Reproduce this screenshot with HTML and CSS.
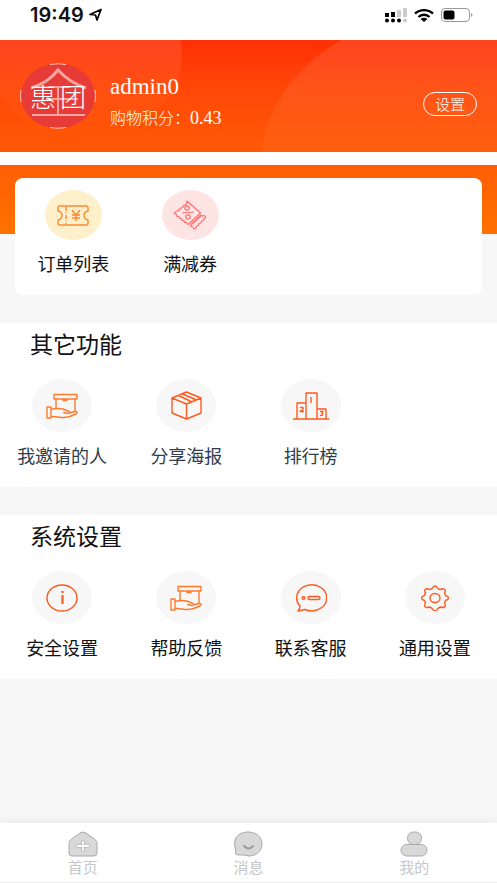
FILE: index.html
```html
<!DOCTYPE html>
<html lang="zh-CN">
<head>
<meta charset="utf-8">
<meta name="viewport" content="width=device-width, initial-scale=1">
<title>我的</title>
<link rel="stylesheet" href="styles.css">
</head>
<body>
<svg class="sprite" aria-hidden="true">
  <symbol id="delivery" viewBox="0 0 32 26">
    <path d="M8 1.500h23v4.500H8zM10 6v10M29 6v13M16.500 7.500h5M1 14h4v11H1zM5 16.500c5-1.500 9-1 12-.5l6 2.500q2 2-1 2l-5-1M5 23.500c6-.5 8 1.500 13 1 5-.5 8-1.500 12-3.500 2-1.500 1-3-1-2.500l-6 1.500"/>
  </symbol>
</svg>

<header class="status">
  <div class="status-left">
    <span class="time">19:49</span>
    <svg width="15" height="14" viewBox="0 0 15 14"><path d="M2 6.500 13 1.500 9 12 7.500 7z" fill="none" stroke="#000" stroke-width="1.700" stroke-linejoin="round"/></svg>
  </div>
  <div class="status-right">
    <svg width="22" height="15" viewBox="0 0 22 15">
      <path d="M0 5h4v4H0zM6 4h4v5H6z"/><path d="M12 2h4v7h-4zM18 0h4v9h-4z" fill="#ccc"/>
      <circle cx="2" cy="12.500" r="2"/><circle cx="8" cy="12.500" r="2"/><circle cx="14" cy="12.500" r="2"/><circle cx="20" cy="12.500" r="2" fill="#ccc"/>
    </svg>
    <svg width="20" height="13" viewBox="0 0 20 13"><path d="M1 4.500c5-4.500 13-4.500 18 0M4.500 8c3-3 8-3 11 0" fill="none" stroke="#000" stroke-width="2.400"/><path d="M6.500 10q3.500-2.500 7 0L10 13z"/></svg>
    <svg width="32" height="14" viewBox="0 0 32 14"><rect x=".5" y=".5" width="28" height="13" rx="3.500" fill="none" stroke="#999"/><rect x="2.500" y="2.500" width="11" height="9" rx="2"/><path d="M30 5q3 2 0 4z" fill="#999"/></svg>
  </div>
</header>

<main>
  <section class="profile">
    <svg class="profile-bg" viewBox="0 0 497 112" preserveAspectRatio="none" aria-hidden="true">
      <defs><linearGradient id="glow" gradientUnits="userSpaceOnUse" x1="0" y1="0" x2="0" y2="112"><stop offset="0" stop-color="#fff" stop-opacity=".1"/><stop offset="1" stop-color="#fff" stop-opacity=".03"/></linearGradient>
      <linearGradient id="fade" gradientUnits="userSpaceOnUse" x1="0" y1="0" x2="0" y2="90"><stop offset="0" stop-color="#fff" stop-opacity=".1"/><stop offset="1" stop-color="#fff" stop-opacity="0"/></linearGradient></defs>
      <ellipse cx="85" cy="15" rx="97" ry="82" fill="url(#fade)"/>
      <ellipse cx="451" cy="125" rx="190" ry="153" fill="url(#glow)"/>
    </svg>
    <svg class="avatar" viewBox="0 0 76 66" role="img" aria-label="惠团">
      <ellipse cx="38" cy="33" rx="37" ry="32.500" fill="#e63b36"/>
      <path d="M30 1.500q8-1.500 16 0M30 64.500q8 1.500 16 0M1 27q-1 6 0 12M75 27q1 6 0 12" fill="none" stroke="#ffc0b8"/>
      <g fill="none" stroke="#f5a5a1" stroke-width="2"><path d="M11 25Q28 20 38 7q12 13 28 18" stroke-width="3"/><path d="M28 24h22M38 24v27M26 36h32M12 52h53"/></g>
      <text x="10" y="44">惠</text><text x="40" y="44">团</text>
    </svg>
    <div class="who">
      <h1>admin0</h1>
      <p>购物积分：<span class="points">0.43</span></p>
    </div>
    <button class="setting" type="button">设置</button>
  </section>

  <section class="orders">
    <nav class="card grid">
      <a href="#orders"><span class="icon yellow"><svg width="32" height="21" viewBox="0 0 32 21"><path d="M3 1h26q2 0 2 2v3q-4 1-4 4.500t4 4.500v3q0 2-2 2H3q-2 0-2-2v-3q4-1 4-4.500T1 6V3q0-2 2-2z"/><path d="M9 2v17" stroke-dasharray="4 1.500 1 1.500"/><path d="m15 5 4 5 4-5M19 10v6M15 10h8M15 13h8"/></svg></span>订单列表</a>
      <a href="#coupons"><span class="icon pink"><svg width="34" height="30" viewBox="0 0 34 30"><path d="M14 1 27.500 13 15 24.500l-1.500-2-2 0-.5-2-2 0-.5-2-2 0-.5-2-2 0-.5-2-2.500-1 2.500-2.500 2 0 .5-2 2 0 .5-2 2 0 .5-2 2 0zM28 15l1.500 1 2-.5 1.500 2-2 1-.5 2-2 .5-.5 2-2 .5-.5 2-2 .5-.5 2-2 1-1.500-2-2-1 .5-1.500zM18 25l10-9"/><circle cx="14" cy="8" r="2.200"/><circle cx="15" cy="17" r="2.200"/><path d="m9 13 12-1"/></svg></span>满减券</a>
    </nav>
  </section>

  <section class="panel muted">
    <h2>其它功能</h2>
    <nav class="grid">
      <a href="#invited"><span class="icon"><svg width="32" height="26"><use href="#delivery"/></svg></span>我邀请的人</a>
      <a href="#poster"><span class="icon deep"><svg width="31" height="29" viewBox="0 0 31 29"><path d="M15.500 1 30 7v15l-14.500 6L1 22V7zM1 7l14.500 6L30 7M15.500 13v15M7.500 4.500 20 10.500M11.500 3l13 5.500"/></svg></span>分享海报</a>
      <a href="#ranking"><span class="icon deep"><svg width="36" height="28" viewBox="0 0 36 28"><path d="M0 27h36M4 27V11h9M13 27V1h11v26M24 17h9v10"/><path d="M18 5v6M7 15.500h3v2L7 19.500h4M27 19.500h3l-1 2q2 2-2 2" stroke-width="1.400"/></svg></span>排行榜</a>
    </nav>
  </section>

  <section class="panel">
    <h2>系统设置</h2>
    <nav class="grid">
      <a href="#security"><span class="icon deep"><svg width="32" height="28" viewBox="0 0 32 28"><ellipse cx="16" cy="14" rx="15" ry="13"/><path d="M16.500 11v9M16.500 7v2" stroke-width="2.200"/></svg></span>安全设置</a>
      <a href="#help"><span class="icon"><svg width="32" height="26"><use href="#delivery"/></svg></span>帮助反馈</a>
      <a href="#service"><span class="icon deep"><svg width="32" height="28" viewBox="0 0 32 28"><path d="M5 22A15 13 0 1 1 10 25.500L3 27q2-2 2-5z"/><ellipse cx="8.500" cy="14" rx="1.500" ry="1.300"/><rect x="13" y="12.500" width="12" height="3" rx="1.500"/></svg></span>联系客服</a>
      <a href="#general"><span class="icon deep"><svg width="28" height="26" viewBox="0 0 28 26"><path d="M11.500 3q2.500-4 5 0l1 1 2 .5c4-2 6 .5 4 3.500l1 2.500c4 1 4 4 0 5l-1 2.500c2 3.500-.5 5.500-4 4l-2 1-1 1q-2.500 4-5 0l-1-1-2-1c-4 1.500-6-.5-4-4l-1-2.500c-4-1-4-4 0-5l1-2.500c-2-3 .5-5.500 4-3.500l2-.5z"/><ellipse cx="14" cy="13" rx="5" ry="4.500"/></svg></span>通用设置</a>
    </nav>
  </section>
</main>

<nav class="tabs">
  <a href="#home"><svg width="30" height="26" viewBox="0 0 30 26"><path d="M3 8.500 12 2q3-2 6 0l9 6.500q2 1.500 2 4v9.500q0 3-3 3H4q-3 0-3-3v-9.500q0-2.500 2-4z"/><path d="M9.500 15h11M15 10.500v9" stroke="#aaa" stroke-width="3.200" stroke-linecap="round"/><path d="M9.500 15h11M15 10.500v9" stroke="#fff" stroke-width="1.800" stroke-linecap="round"/></svg>首页</a>
  <a href="#messages"><svg width="30" height="26" viewBox="0 0 30 26"><path d="M2.500 18C-1 8 5 1 15 1c8 0 14 5 14 12s-6 12-13 12l-5-1H5q-3 0-2.500-3z"/><path d="M11 15q5 5 9 0" fill="none" stroke="#999" stroke-width="2" stroke-linecap="round"/></svg>消息</a>
  <a href="#mine"><svg width="28" height="26" viewBox="0 0 28 26"><rect x="7.500" y="1" width="14" height="12.500" rx="6"/><rect x="1" y="13.500" width="26" height="11.500" rx="5.700"/></svg>我的</a>
</nav>
</body>
</html>
```
FILE: styles.css
```css
* { box-sizing: border-box; }
body {
  margin: 0;
  min-height: 100vh;
  display: flex;
  flex-direction: column;
  background: #f7f7f7;
  color: #111;
  font-family: "Liberation Serif", "Noto Sans CJK SC", serif;
}
h1, h2, p { margin: 0; font-weight: 400; }
a { color: inherit; text-decoration: none; }
svg { display: block; flex: none; }
.sprite { position: absolute; width: 0; height: 0; }
main { flex: 1; }

.status {
  height: 40px;
  padding: 0 24px 10px 30px;
  display: flex;
  align-items: center;
  justify-content: space-between;
  background: #fff;
}
.status-left, .status-right { display: flex; align-items: center; }
.status-left { gap: 4px; }
.status-right { gap: 7px; }
.time { font: 600 20px/20px Inter, sans-serif; }

.profile {
  position: relative;
  height: 112px;
  padding: 0 20px;
  display: flex;
  align-items: center;
  gap: 14px;
  background: linear-gradient(#ff3005, #ff4808 45%, #ff5a05);
  color: #fff;
}
.profile-bg { position: absolute; inset: 0; width: 100%; height: 100%; }
.avatar, .who, .setting { position: relative; }
.avatar { width: 76px; height: 66px; }
.avatar text { font: 300 26px "Noto Sans CJK SC", sans-serif; fill: #fff; }
.who { flex: 1; padding-top: 12px; }
.who h1 { font-size: 23px; line-height: 32px; }
.who p { font-size: 16px; font-weight: 300; line-height: 30px; }
.points { font-size: 18px; }
.setting {
  width: 54px;
  height: 24px;
  margin-top: 16px;
  padding: 0;
  border: 1px solid #fff;
  border-radius: 12px;
  background: transparent;
  color: #fff;
  font: 300 15px/20px "Noto Sans CJK SC", sans-serif;
}

.orders {
  padding: 26px 15px 28px;
  background:
    linear-gradient(#fff, #fff) 0 0 / 100% 13px no-repeat,
    linear-gradient(#ff5a05, #ff7200) 0 0 / 100% 82px no-repeat;
}
.card { padding: 12px 0 16px; background: #fff; border-radius: 8px; }
.grid { display: grid; grid-template-columns: repeat(4, 1fr); }
.grid a {
  display: flex;
  flex-direction: column;
  align-items: center;
  gap: 11px;
  font-size: 18px;
  line-height: 28px;
  white-space: nowrap;
}
.icon {
  width: 60px;
  height: 53px;
  display: grid;
  place-items: center;
  border-radius: 50%;
  background: #f7f7f7;
  color: #ff7a2c;
}
.icon svg { fill: none; stroke: currentColor; stroke-width: 1.4; stroke-linejoin: round; }
.deep { color: #ff5a1f; }
.card .icon { width: 57px; height: 50px; }
.card .yellow { background: #fff0cc; color: #ff8833; }
.card .pink { background: #ffe4e4; color: #ff7070; }
.card .pink svg { stroke-width: 1.2; }

.panel { height: 164px; margin-bottom: 28px; background: #fff; }
.panel h2 { padding: 7px 30px 17px; font-size: 23px; line-height: 32px; }
.muted a { color: #2f3d4d; }

.tabs {
  height: 60px;
  display: grid;
  grid-template-columns: repeat(3, 1fr);
  background: #fff;
  border-bottom: 1px solid #eee;
  box-shadow: 0 -2px 10px rgba(0, 0, 0, .06);
}
.tabs a {
  padding-top: 8px;
  display: flex;
  flex-direction: column;
  align-items: center;
  font-size: 15px;
  line-height: 22px;
  color: #c5c7cc;
}
.tabs svg { fill: #d8d8d8; stroke: #aaa; }
```
